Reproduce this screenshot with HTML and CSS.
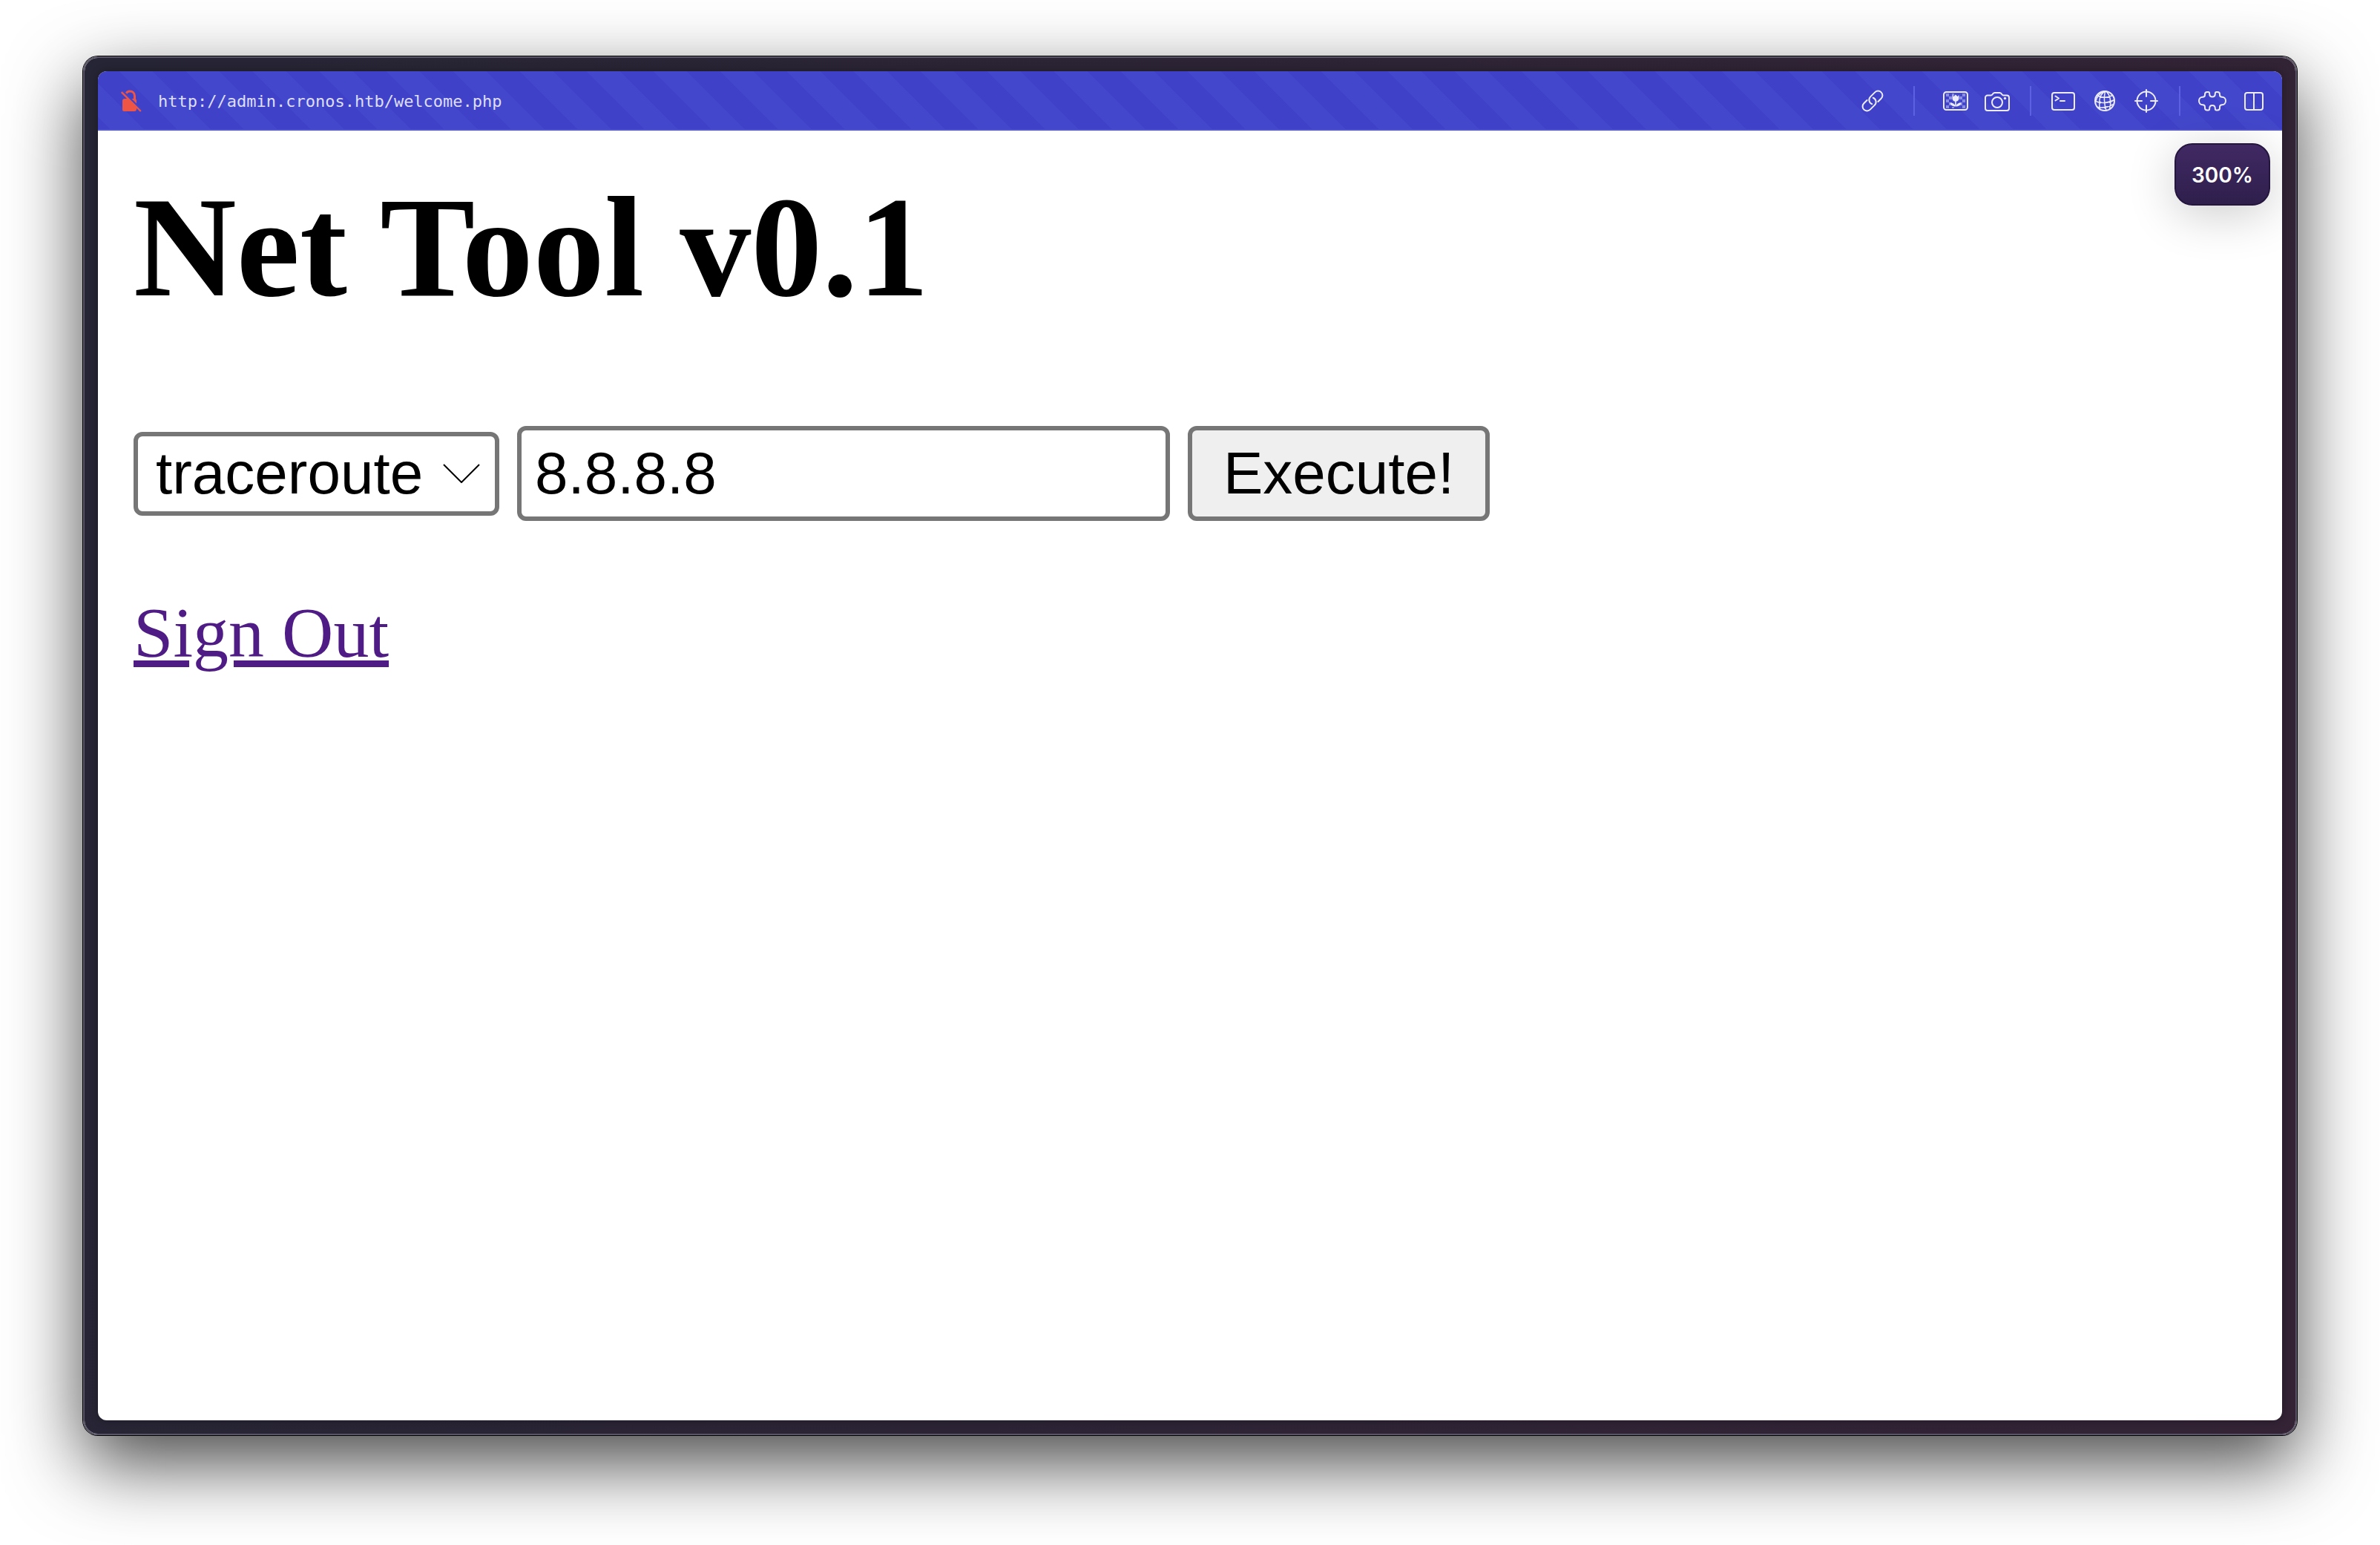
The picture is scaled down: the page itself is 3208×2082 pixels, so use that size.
FILE: index.html
```html
<!DOCTYPE html>
<html lang="en">
<head>
  <meta charset="utf-8">
  <title>Net Tool v0.1</title>
  <link rel="stylesheet" href="styles.css">
</head>
<body>
  <div class="window">
    <div class="viewport">
      <header class="toolbar">
        <svg class="lock" viewBox="0 0 28 30" aria-hidden="true">
          <path d="M6.500 6C7.500 3.200 9.500 2 12 2c4 0 6.500 2.600 6.500 6.500V13" fill="none" stroke="#ee5545" stroke-width="3"/>
          <path d="M2 15a3 3 0 0 1 3-3h13a3 3 0 0 1 3 3v11a3 3 0 0 1-3 3H4a2 2 0 0 1-2-2z" fill="#ee5545"/>
          <path d="M2.500 2l25 25" stroke="#4145ca" stroke-width="3"/>
          <path d="M0.800 3l26 26" stroke="#ee5545" stroke-width="2.400"/>
        </svg>
        <input class="address" type="text" aria-label="Address" value="http://admin.cronos.htb/welcome.php" spellcheck="false">
        <nav class="tools" aria-label="Page tools">
          <button class="tool" type="button" aria-label="Copy link">
            <svg class="icon" viewBox="0 0 36 36"><g transform="rotate(-45 18 18)"><path d="M13.500 12H7.500a6 6 0 0 0 0 12h8.500a6 6 0 0 0 5.500-8.500"/><path d="M22.500 24h6a6 6 0 0 0 0-12H20a6 6 0 0 0-5.500 8.500"/></g></svg>
          </button>
          <span class="divider divider-wide"></span>
          <button class="tool" type="button" aria-label="Images">
            <svg class="icon" viewBox="0 0 36 36">
              <g class="checker"><path d="M5 8h4v4H5zM9 12h4v4H9zM5 16h4v4H5zM9 20h4v4H9zM5 24h4v4H5zM13 8h3v3h-3zM13 26h3v2h-3zM27 8h4v4h-4zM23 12h4v4h-4zM27 16h4v4h-4zM23 20h4v4h-4zM27 24h4v4h-4z"/></g>
              <rect x="2" y="6" width="32" height="24" rx="3.500"/>
              <path class="solid" d="M13.500 10l2 2 2.500-2.500 2.500 2.500 2-2v4.500c0 2.300-1.300 3.800-3.700 4.200V25h-1.600v-6.300c-2.400-.4-3.700-1.900-3.700-4.200zM10.500 20.500c4 0 6.500 1.500 7.500 5-4 0-7-1.500-7.500-5zM25.500 20.500c-4 0-6.500 1.500-7.500 5 4 0 7-1.500 7.500-5z"/>
            </svg>
          </button>
          <button class="tool" type="button" aria-label="Capture">
            <svg class="icon" viewBox="0 0 36 36"><path d="M5 10.500h4.500c1 0 1.500-.4 2-1.200.8-1.400 1.500-2.300 3-2.300h7c1.500 0 2.200.9 3 2.300.5.800 1 1.200 2 1.200H31a3 3 0 0 1 3 3V28a3 3 0 0 1-3 3H5a3 3 0 0 1-3-3V13.500a3 3 0 0 1 3-3z"/><circle cx="18" cy="20" r="7"/><circle class="solid" cx="28.500" cy="14.500" r="1.700"/></svg>
          </button>
          <span class="divider"></span>
          <button class="tool" type="button" aria-label="Console">
            <svg class="icon" viewBox="0 0 36 36"><rect x="3" y="7" width="30" height="23" rx="3"/><path d="M7.500 11.500l4.500 3-4.500 3M14 18h6"/></svg>
          </button>
          <button class="tool" type="button" aria-label="Network">
            <svg class="icon" viewBox="0 0 36 36"><circle cx="18" cy="18" r="13"/><g class="thin"><path d="M7.500 10.500c6 3.500 14 3.500 21 0M5.500 18.500c7 3 17 3 25.500-2M8.500 26.500c7 1 14 0 20-3.500M19 5c-7 3-10 10-7.500 24.500M19 5c-2.500 6-2 17 1 26M20 5c5 5 7 14 4.500 24M17 5c-5 2-9 6-11 13"/></g><circle class="solid" cx="12" cy="20" r="1.500"/><circle class="solid" cx="25" cy="19.500" r="1.500"/><circle class="solid" cx="18.500" cy="27" r="1.500"/></svg>
          </button>
          <button class="tool" type="button" aria-label="Inspect">
            <svg class="icon" viewBox="0 0 36 36"><circle cx="18" cy="18" r="12.500"/><path d="M18 3v9M18 24v9M3 18h9M24 18h9"/></svg>
          </button>
          <span class="divider"></span>
          <button class="tool" type="button" aria-label="Extensions">
            <svg class="icon icon-wide" viewBox="0 0 40 36"><path d="M10 9a3 3 0 0 1 3-3h1.500c1.200 0 1.700 1 1.700 2.200 0 2.600 1.600 4.300 3.800 4.300s3.800-1.700 3.800-4.300c0-1.200.5-2.200 1.700-2.200H27a3 3 0 0 1 3 3v1c0 2 1 2.800 3 2.800 3 0 5 2.200 5 5.200s-2 5.200-5 5.200c-2 0-3 .8-3 2.800v1.500a3 3 0 0 1-3 3h-1.500c-1.200 0-1.700-1-1.700-2.200 0-2.600-1.600-4.300-3.800-4.300s-3.800 1.700-3.800 4.300c0 1.200-.5 2.200-1.700 2.200H13a3 3 0 0 1-3-3v-1.500c0-2-1-2.800-3-2.800-3 0-5-2.200-5-5.200s2-5.200 5-5.200c2 0 3-.8 3-2.800z"/></svg>
          </button>
          <button class="tool" type="button" aria-label="Split view">
            <svg class="icon" viewBox="0 0 36 36"><rect x="6" y="7" width="24" height="23" rx="3"/><path d="M18 7v23"/></svg>
          </button>
        </nav>
      </header>
      <main class="page">
        <h1 class="title">Net Tool v0.1</h1>
        <form class="command">
          <div class="picker">
            <select class="control select" aria-label="Command">
              <option>traceroute</option>
              <option>ping</option>
            </select>
            <svg class="chevron" viewBox="0 0 50 26" aria-hidden="true"><path d="M1 1l24 24L49 1"/></svg>
          </div>
          <input class="control host" type="text" aria-label="Host" value="8.8.8.8">
          <button class="control execute" type="button">Execute!</button>
        </form>
        <a class="sign-out" href="logout.php">Sign Out</a>
        <output class="zoom">300%</output>
      </main>
    </div>
  </div>
</body>
</html>
```
FILE: styles.css
```css
* {
  box-sizing: border-box;
}

body {
  display: flex;
  min-height: 100vh;
  margin: 0;
  padding: 76px 112px 148px;
  background: #fff;
}

.window {
  display: flex;
  flex: 1;
  padding: 18px;
  border: 2px solid #5a5566;
  border-radius: 20px;
  background: linear-gradient(100deg, #262535, #332335) padding-box;
  box-shadow: 0 0 0 1px #000, 0 38px 100px rgba(0, 0, 0, 0.72);
}

.viewport {
  display: flex;
  flex: 1;
  flex-direction: column;
  overflow: hidden;
  border-radius: 12px;
  background: #fff;
  box-shadow: 0 0 12px rgba(0, 0, 0, 0.3);
}

/* Browser toolbar */
.toolbar {
  display: flex;
  align-items: center;
  height: 80px;
  padding: 0 10px 0 31px;
  background: linear-gradient(45deg, #3f42c8 25%, #4347cb 25% 50%, #3f42c8 50% 75%, #4347cb 75%) -26px -10px / 90px 90px;
  box-shadow: inset 0 -2px #5053cf;
}

.lock {
  width: 28px;
  height: 30px;
}

.address {
  flex: 1;
  min-width: 0;
  margin: 0 24px 0 22px;
  padding: 2px 0 0;
  border: 0;
  outline: 0;
  background: none;
  color: #dedef8;
  font: 22px/32px "DejaVu Sans Mono", monospace;
}

.tools {
  display: flex;
  align-items: center;
}

.tool {
  display: flex;
  align-items: center;
  justify-content: center;
  width: 56px;
  height: 56px;
  padding: 0;
  border: 0;
  background: none;
}

.icon {
  width: 36px;
  height: 36px;
  fill: none;
  stroke: #ececfc;
  stroke-width: 2;
  stroke-linecap: round;
  stroke-linejoin: round;
}

.icon-wide {
  width: 40px;
}

.icon .solid {
  fill: #ececfc;
  stroke: none;
}

.icon .thin {
  stroke-width: 1.5;
}

.icon .checker {
  fill: #8b8de0;
  stroke: none;
}

.divider {
  width: 2px;
  height: 40px;
  margin: 0 15px 0 16px;
  background: #5d60e0;
}

.divider-wide {
  margin: 0 27px;
}

/* Page content */
.page {
  position: relative;
  flex: 1;
  padding: 48px;
}

.title {
  margin: 0 0 130px;
  font: bold 192px/220px "Liberation Serif", serif;
}

.command {
  display: flex;
  align-items: center;
  gap: 24px;
  margin-bottom: 96px;
}

.control {
  margin: 0;
  border: 6px solid #767676;
  border-radius: 12px;
  outline: 0;
  color: #000;
  font: 80px/92px "Liberation Sans", sans-serif;
}

.picker {
  display: grid;
  align-items: center;
}

.picker > * {
  grid-area: 1 / 1;
}

.select {
  width: 493px;
  height: 113px;
  padding: 0 0 0 24px;
  appearance: none;
  background: #fff;
}

.chevron {
  justify-self: end;
  width: 50px;
  height: 26px;
  margin-right: 26px;
  fill: none;
  stroke: #000;
  stroke-width: 2;
  pointer-events: none;
}

.host {
  width: 880px;
  height: 128px;
  padding: 0 18px;
  background: #fff;
}

.execute {
  height: 128px;
  padding: 0 42px;
  background: #efefef;
}

.sign-out {
  color: #4f1c86;
  font: 96px/110px "Liberation Serif", serif;
  text-decoration-thickness: 9px;
  text-underline-offset: 5px;
}

/* Zoom level badge over the page */
.zoom {
  position: absolute;
  top: 17px;
  right: 16px;
  width: 129px;
  padding: 25px 0 23px;
  border: 2px solid #25163f;
  border-radius: 24px;
  background: linear-gradient(#412963, #2e1f4c);
  box-shadow: 0 12px 64px rgba(0, 0, 0, 0.2);
  color: #fff;
  font: 600 28px/32px Inter, sans-serif;
  text-align: center;
}
```
